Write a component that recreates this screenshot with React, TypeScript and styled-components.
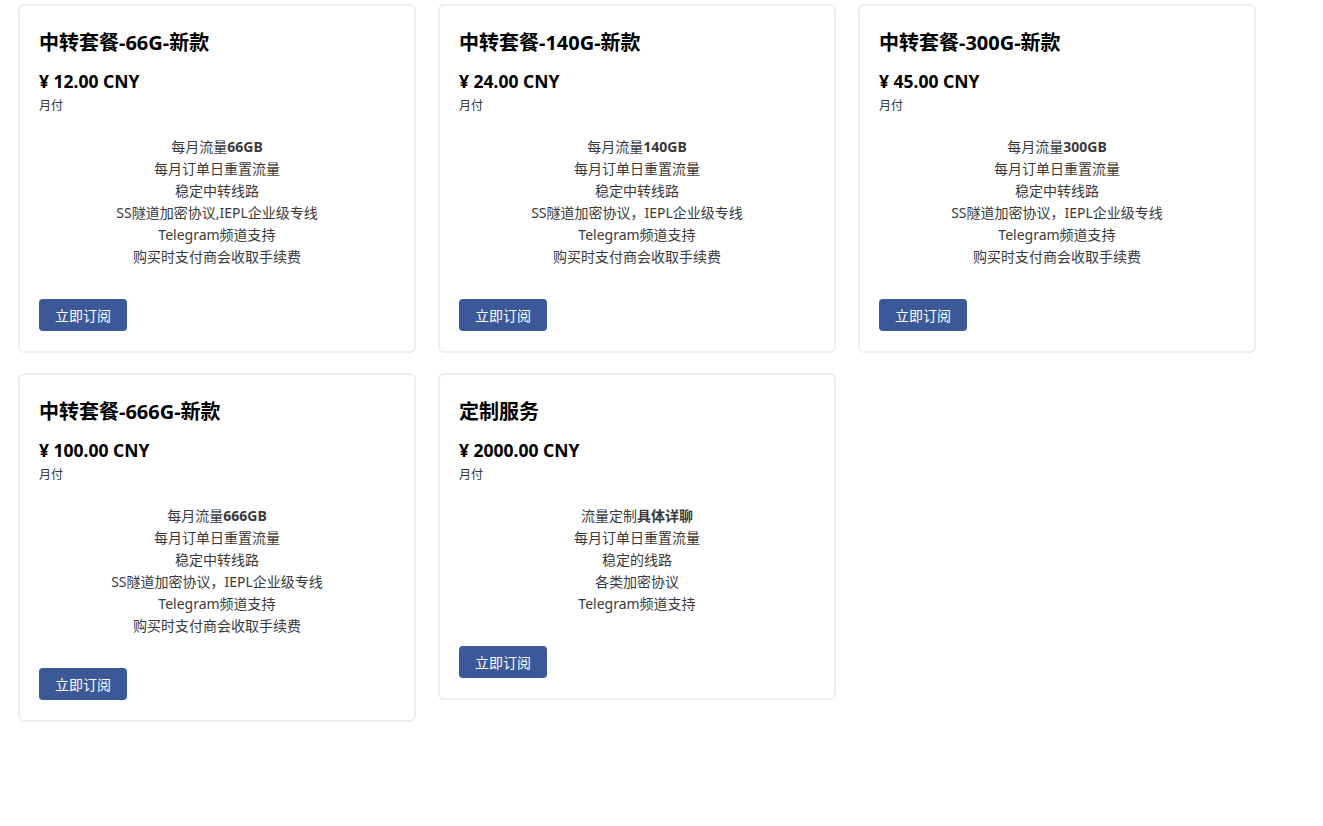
import React from 'react';
import styled, { createGlobalStyle } from 'styled-components';

const GlobalStyle = createGlobalStyle`
  html, body {
    margin: 0;
    padding: 0;
    background: #fff;
  }
  body {
    font-family: "Noto Sans", "Noto Sans CJK SC", sans-serif;
    color: #333;
  }
`;

interface Plan {
  name: string;
  price: string;
  period: string;
  features: React.ReactNode[];
}

const plans: Plan[] = [
  {
    name: '中转套餐-66G-新款',
    price: '¥ 12.00 CNY',
    period: '月付',
    features: [
      <>每月流量<b>66GB</b></>,
      '每月订单日重置流量',
      '稳定中转线路',
      'SS隧道加密协议,IEPL企业级专线',
      'Telegram频道支持',
      '购买时支付商会收取手续费',
    ],
  },
  {
    name: '中转套餐-140G-新款',
    price: '¥ 24.00 CNY',
    period: '月付',
    features: [
      <>每月流量<b>140GB</b></>,
      '每月订单日重置流量',
      '稳定中转线路',
      'SS隧道加密协议，IEPL企业级专线',
      'Telegram频道支持',
      '购买时支付商会收取手续费',
    ],
  },
  {
    name: '中转套餐-300G-新款',
    price: '¥ 45.00 CNY',
    period: '月付',
    features: [
      <>每月流量<b>300GB</b></>,
      '每月订单日重置流量',
      '稳定中转线路',
      'SS隧道加密协议，IEPL企业级专线',
      'Telegram频道支持',
      '购买时支付商会收取手续费',
    ],
  },
  {
    name: '中转套餐-666G-新款',
    price: '¥ 100.00 CNY',
    period: '月付',
    features: [
      <>每月流量<b>666GB</b></>,
      '每月订单日重置流量',
      '稳定中转线路',
      'SS隧道加密协议，IEPL企业级专线',
      'Telegram频道支持',
      '购买时支付商会收取手续费',
    ],
  },
  {
    name: '定制服务',
    price: '¥ 2000.00 CNY',
    period: '月付',
    features: [
      <>流量定制<b>具体详聊</b></>,
      '每月订单日重置流量',
      '稳定的线路',
      '各类加密协议',
      'Telegram频道支持',
    ],
  },
];

const Page = styled.div`
  padding: 4px 18px;
`;

const PlanGrid = styled.div`
  display: grid;
  grid-template-columns: repeat(3, 398px);
  column-gap: 22px;
  row-gap: 20px;
  align-items: start;
`;

const Card = styled.div`
  box-sizing: border-box;
  border: 2px solid #eeeeee;
  border-radius: 6px;
  padding: 23px 19px 20px;
  background: #fff;
`;

const Title = styled.h3`
  margin: 0;
  font-size: 20px;
  line-height: 28px;
  font-weight: 700;
  color: #000;
`;

const Price = styled.div`
  margin-top: 13px;
  font-size: 17.5px;
  line-height: 22px;
  font-weight: 700;
  color: #000;
`;

const Period = styled.div`
  margin-top: 6px;
  font-size: 12px;
  line-height: 16px;
  color: #333;
`;

const Features = styled.ul`
  list-style: none;
  margin: 22px 0 0;
  padding: 0;
  text-align: center;
  font-size: 14px;
  line-height: 22px;
  color: #3a3a3a;

  b {
    font-weight: 700;
  }
`;

const SubscribeButton = styled.button`
  margin-top: 31px;
  height: 32px;
  width: 88px;
  border: none;
  border-radius: 4px;
  background: #3b5998;
  color: #fff;
  font-family: inherit;
  font-size: 14px;
  cursor: pointer;
`;

export default function App() {
  return (
    <Page>
      <GlobalStyle />
      <PlanGrid>
        {plans.map((plan) => (
          <Card key={plan.name}>
            <Title>{plan.name}</Title>
            <Price>{plan.price}</Price>
            <Period>{plan.period}</Period>
            <Features>
              {plan.features.map((f, i) => (
                <li key={i}>{f}</li>
              ))}
            </Features>
            <SubscribeButton>立即订阅</SubscribeButton>
          </Card>
        ))}
      </PlanGrid>
    </Page>
  );
}
